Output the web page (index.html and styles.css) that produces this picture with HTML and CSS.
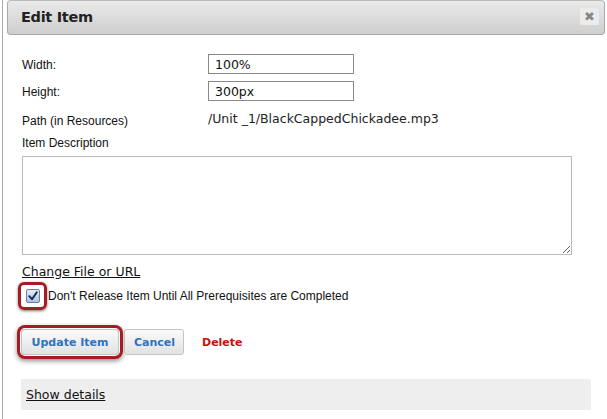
FILE: index.html
```html
<!DOCTYPE html>
<html>
<head>
<meta charset="utf-8">
<link rel="stylesheet" href="styles.css">
</head>
<body>
<div class="dialog">
  <div class="titlebar">
    <span class="title">Edit Item</span>
    <span class="close">&#x2716;</span>
  </div>
  <div class="body">
    <div class="grid">
      <label class="lbl">Width:</label>
      <div class="field"><input class="txt" type="text" value="100%"></div>
      <label class="lbl">Height:</label>
      <div class="field"><input class="txt" type="text" value="300px"></div>
      <label class="lbl path-lbl">Path (in Resources)</label>
      <div class="path-val">/Unit _1/BlackCappedChickadee.mp3</div>
    </div>
    <div class="desc-lbl">Item Description</div>
    <textarea class="desc"></textarea>
    <a class="change" href="#">Change File or URL</a>
    <div class="check-row">
      <span class="hl-check">
        <span class="cbox" role="checkbox" aria-checked="true">
          <svg width="10" height="10" viewBox="0 0 10 10"><path d="M1.3 5.2 L4 8.2 L8.8 1.2" fill="none" stroke="#1d2a55" stroke-width="2" stroke-linecap="round" stroke-linejoin="round"/></svg>
        </span>
      </span>
      <span class="check-text">Don't Release Item Until All Prerequisites are Completed</span>
    </div>
    <div class="actions">
      <button class="btn btn-update">Update Item</button>
      <button class="btn btn-cancel">Cancel</button>
      <a class="delete" href="#">Delete</a>
    </div>
    <div class="details"><a href="#">Show details</a></div>
  </div>
</div>
</body>
</html>
```

FILE: styles.css
```css
html, body {
  margin: 0;
  padding: 0;
  background: #fff;
}
.dialog {
  margin-left: 2px;
  border-left: 1px solid #aaa;
  height: 419px;
  box-sizing: border-box;
  padding-left: 4px;
  padding-right: 2px;
}
.titlebar {
  height: 35px;
  box-sizing: border-box;
  border: 1px solid #aaa;
  border-top-color: #bbb;
  border-radius: 4px;
  background: linear-gradient(#e9e9e9, #cfcfcf);
  display: flex;
  align-items: center;
  justify-content: space-between;
  padding: 0 5px 1px 13px;
}
.title {
  font-family: "DejaVu Sans", Verdana, sans-serif;
  font-weight: bold;
  font-size: 14.5px;
  color: #222;
  letter-spacing: -0.3px;
}
.close {
  width: 19px;
  height: 17px;
  margin-top: -1px;
  border-radius: 2px;
  background: #ececec;
  color: #888;
  font-size: 13px;
  font-family: "DejaVu Sans", sans-serif;
  display: flex;
  align-items: center;
  justify-content: center;
}
.body {
  padding: 19px 14px 0 15px;
  font-family: "Liberation Sans", Arial, sans-serif;
  font-size: 12px;
  color: #111;
}
.grid {
  display: grid;
  grid-template-columns: 186px 1fr;
  row-gap: 7px;
  align-items: center;
}
.grid .lbl {
  padding-top: 2px;
}
.field {
  height: 20px;
}
.txt {
  box-sizing: border-box;
  width: 146px;
  height: 20px;
  margin: 0;
  border: 1px solid #888;
  padding: 0 6px;
  font-family: "DejaVu Sans", Verdana, sans-serif;
  font-size: 12.5px;
  color: #111;
}
.path-lbl {
  margin-top: 4px;
}
.path-val {
  margin-top: 0;
  font-family: "DejaVu Sans", Verdana, sans-serif;
  font-size: 12.5px;
  color: #222;
}
.desc-lbl {
  margin-top: 8px;
}
.desc {
  display: block;
  box-sizing: border-box;
  margin: 6px 0 0 0;
  width: 550px;
  height: 99px;
  border: 1px solid #bbb;
  resize: both;
}
.change {
  display: inline-block;
  margin-top: 9px;
  font-family: "DejaVu Sans", Verdana, sans-serif;
  font-size: 12.5px;
  color: #111;
}
.check-row {
  display: flex;
  align-items: center;
  margin-top: 3px;
  margin-left: -4px;
}
.hl-check {
  display: inline-flex;
  align-items: center;
  justify-content: center;
  width: 23px;
  height: 22px;
  border: 3px solid #a51d23;
  border-radius: 6px;
  box-shadow: 0 1px 3px rgba(0,0,0,0.55);
}
.cbox {
  width: 14px;
  height: 14px;
  box-sizing: border-box;
  border: 1px solid #6f7f99;
  border-radius: 2px;
  background: linear-gradient(#e4eefb, #a9c4e8);
  display: flex;
  align-items: center;
  justify-content: center;
}
.check-text {
  margin-left: 1px;
}
.actions {
  display: flex;
  align-items: center;
  margin-top: 19px;
}
.btn {
  height: 26px;
  box-sizing: border-box;
  border: 1px solid #c4c4c4;
  border-radius: 3px;
  background: linear-gradient(#fafafa, #e2e2e2);
  font-family: "DejaVu Sans", Verdana, sans-serif;
  font-weight: bold;
  font-size: 11px;
  color: #2f72bd;
  padding: 0 9px;
  margin: 0;
}
.btn-update {
  width: 98px;
  margin-left: -1px;
  box-shadow: 0 0 0 1px #fff, 0 0 0 4px #a51d23, 0 2px 5px 4px rgba(0,0,0,0.45);
  border-radius: 4px;
}
.btn-cancel {
  width: 60px;
  margin-left: 5px;
}
.delete {
  margin-left: 18px;
  font-family: "DejaVu Sans", Verdana, sans-serif;
  font-weight: bold;
  font-size: 11px;
  color: #c8120e;
  text-decoration: none;
}
.details {
  margin: 24px 0 0 -1px;
  width: 570px;
  height: 31px;
  background: #eee;
  display: flex;
  align-items: center;
  padding-left: 5px;
  box-sizing: border-box;
}
.details a {
  font-family: "DejaVu Sans", Verdana, sans-serif;
  font-size: 12.5px;
  color: #111;
}
```
